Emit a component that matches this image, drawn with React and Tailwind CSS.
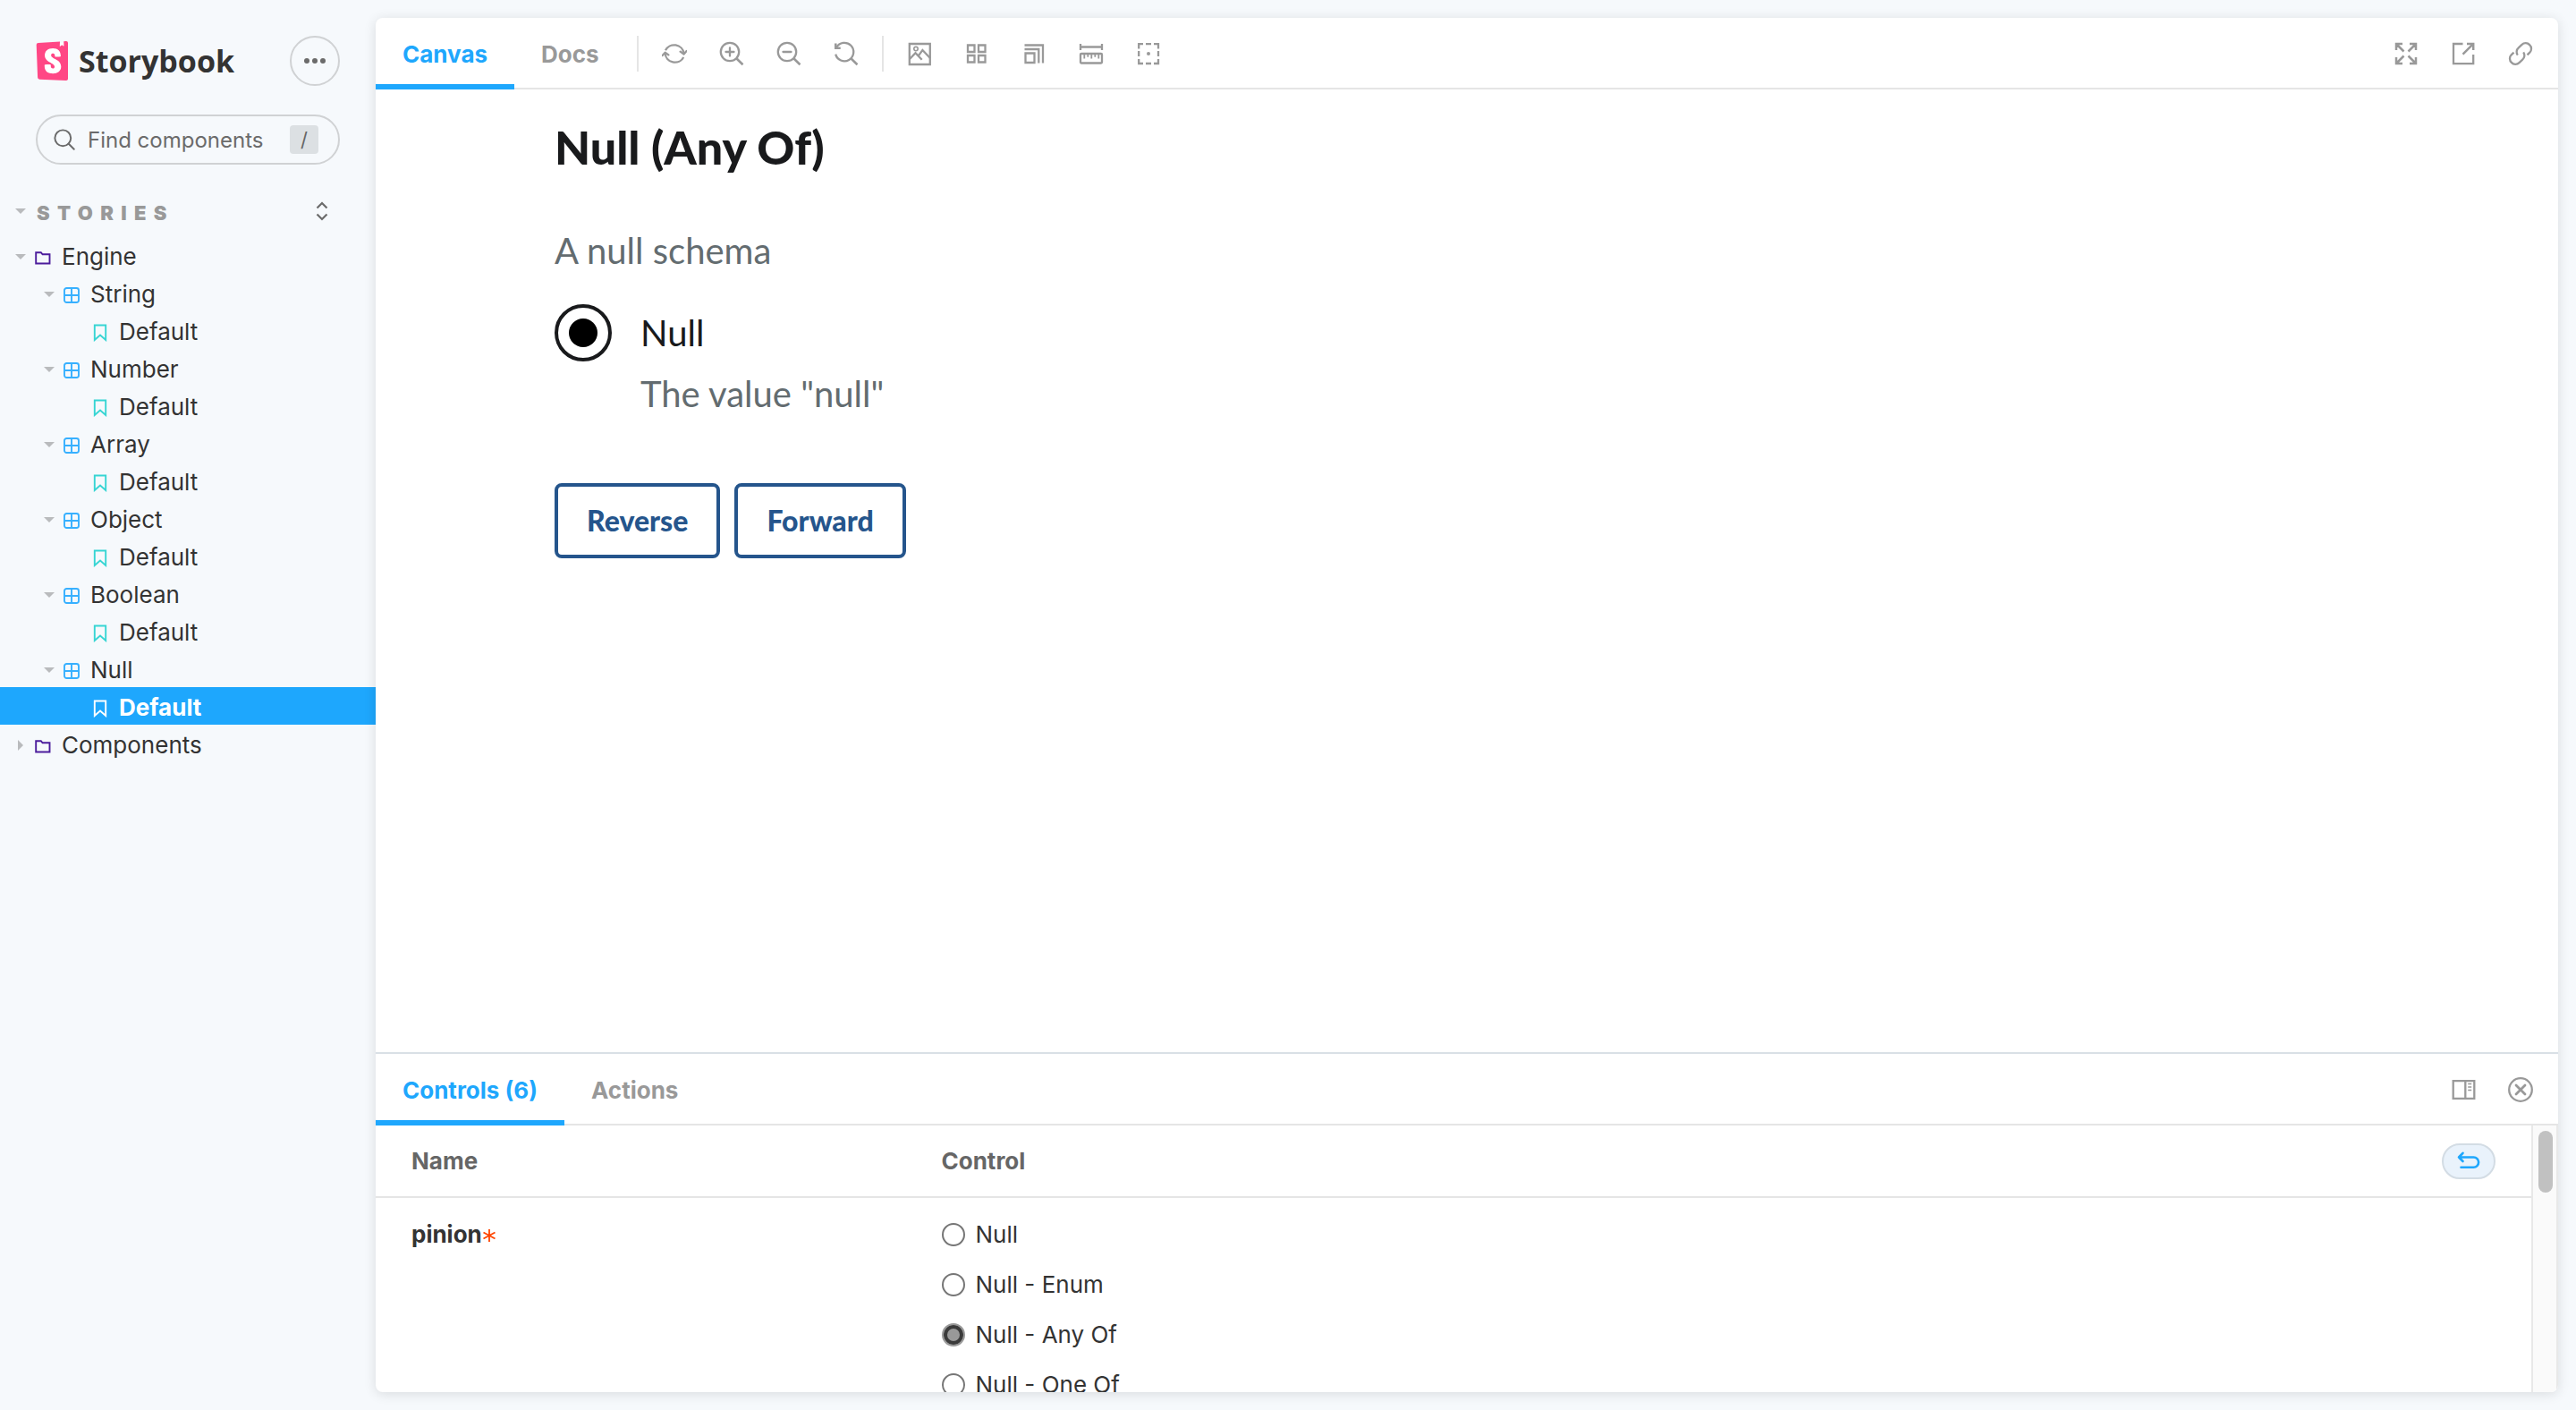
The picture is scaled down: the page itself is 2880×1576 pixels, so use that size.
import React from "react";

const SANS = "font-['Inter',sans-serif]";

/* ---------- icons ---------- */

function Icon({ children, className = "size-7" }) {
  return (
    <svg
      viewBox="0 0 28 28"
      className={className}
      fill="none"
      stroke="currentColor"
      strokeWidth="2.3"
      aria-hidden="true"
    >
      {children}
    </svg>
  );
}

const SyncIcon = () => (
  <Icon>
    <path d="M4 10.200A11 11 0 0 1 24.600 13.500" />
    <path d="M24.200 18A11 11 0 0 1 3.600 13.500" />
    <path d="M20.600 11.600l4 3 3-3.600" strokeLinecap="round" strokeLinejoin="round" />
    <path d="M.600 16l3-3.200 3.800 2.600" strokeLinecap="round" strokeLinejoin="round" />
  </Icon>
);

const ZoomInIcon = () => (
  <Icon>
    <circle cx="12" cy="12" r="10.2" />
    <path d="M19.3 19.3l7.2 7" strokeWidth="2.6" />
    <path d="M12 7.5v9M7.500 12h9" strokeLinecap="round" />
  </Icon>
);

const ZoomOutIcon = () => (
  <Icon>
    <circle cx="12" cy="12" r="10.2" />
    <path d="M19.3 19.3l7.2 7" strokeWidth="2.6" />
    <path d="M7.5 12h9" strokeLinecap="round" />
  </Icon>
);

const ZoomResetIcon = () => (
  <Icon>
    <path d="M3.2 7A10.2 10.2 0 1 1 2.2 14.6" />
    <path d="M19.3 19.3l7.2 7" strokeWidth="2.6" />
    <path d="M2.300 2.500v5.200h5.400" strokeWidth="2.600" />
  </Icon>
);

const PhotoIcon = () => (
  <Icon>
    <path d="M2.800 3h23v23h-23z" />
    <circle cx="10" cy="8.600" r="2.200" strokeWidth="1.600" />
    <path d="M3 20l6.500-6.800 7.200 7.600M12.600 16.600L17.400 10l8.600 9" />
  </Icon>
);

const GridIcon = () => (
  <Icon>
    <path d="M4 4.500h7.500v7.500H4zM16 4.500h7.500v7.500H16zM4 16h7.500v7.500H4zM16 16h7.500v7.500H16z" />
  </Icon>
);

const GrowIcon = () => (
  <Icon>
    <path d="M4.500 13.500h10v10.500h-10z" />
    <path d="M3.500 9h15.800v15.500M3.500 4.500H24v20" />
  </Icon>
);

const RulerIcon = () => (
  <Icon>
    <path d="M2 6.500h24M2 3v7M26 3v7" />
    <rect x="2" y="14" width="24" height="10.500" rx="1" />
    <path d="M6.300 14.500v5M10.300 14.500v3.200M14.300 14.500v5M18.300 14.500v3.200M22.300 14.500v5" strokeWidth="1.800" />
  </Icon>
);

const OutlineIcon = () => (
  <Icon>
    <path d="M3.200 8.400V3.200H8M11 3.200h6M20 3.200h5v5.200M25 11v6M25 20v5h-5M17 25h-6M8 25H3.200v-5M3.200 17v-6" />
    <circle cx="14" cy="14" r="2" fill="currentColor" stroke="none" />
  </Icon>
);

const ExpandIcon = () => (
  <Icon>
    <path d="M3 10V3h7M3.500 3.500l8 8M18 3h7v7M24.500 3.500l-8 8M3 18v7h7M3.500 24.500l8-8M25 18v7h-7M24.500 24.500l-8-8" strokeWidth="2.500" />
  </Icon>
);

const ShareIcon = () => (
  <Icon>
    <path d="M13.500 3H3v22.200h22.200V15" />
    <path d="M18 3h7.200v7M25 3.200L13.500 14.600" strokeWidth="2.500" />
  </Icon>
);

const LinkIcon = () => (
  <Icon>
    <path d="M9.300 16.200a6 6 0 0 1 1-8.200l3.700-3.500a6 6 0 0 1 8.600.2a6 6 0 0 1 .2 8.600L20 16" transform="translate(1.500 -.6)" />
    <path d="M9.300 16.200a6 6 0 0 1 1-8.200l3.700-3.500a6 6 0 0 1 8.600.2a6 6 0 0 1 .2 8.600L20 16" transform="rotate(180 14 14) translate(1.500 -.6)" />
  </Icon>
);

const SidePanelIcon = () => (
  <Icon>
    <path d="M2.700 4.200h23.600v19.600H2.700zM16.300 4v20" />
    <path d="M19.200 7.400h4M19.200 11h4M19.200 14.600h4" strokeWidth="1.500" />
  </Icon>
);

const CloseIcon = () => (
  <Icon>
    <circle cx="14" cy="14" r="12.800" />
    <path d="M9 9l10 10M19 9L9 19" strokeWidth="2.800" strokeLinecap="round" />
  </Icon>
);

const UndoIcon = () => (
  <Icon>
    <path d="M3 9.500h16.500a5.600 5.600 0 0 1 0 11.200H5.500M7.500 4.800L3 9.500l4.500 4.500" strokeWidth="2.600" strokeLinecap="round" strokeLinejoin="round" />
  </Icon>
);

const SearchIcon = () => (
  <Icon className="size-6 shrink-0 text-[#6b6b6b]">
    <circle cx="12" cy="12" r="10.400" />
    <path d="M19.300 19.300l7.200 7.200" strokeLinecap="round" />
  </Icon>
);

const SortIcon = () => (
  <svg viewBox="0 0 16 24" className="h-6 w-4" fill="none" stroke="currentColor" strokeWidth="2.2" aria-hidden="true">
    <path d="M2.500 8.500L8 3l5.500 5.500M2.500 15.500L8 21l5.500-5.500" />
  </svg>
);

function TreeIcon({ kind }) {
  if (kind === "folder") {
    return (
      <svg viewBox="0 0 18 18" className="size-[18px] shrink-0 text-[#4c1d9c]" fill="none" stroke="currentColor" strokeWidth="1.9" aria-hidden="true">
        <path d="M1.200 3.200h5.600l1.800 2.100h7.900v10.200H1.200z" />
      </svg>
    );
  }
  if (kind === "component") {
    return (
      <svg viewBox="0 0 18 18" className="size-[18px] shrink-0 text-[#37b0ff]" fill="none" stroke="currentColor" strokeWidth="1.900" aria-hidden="true">
        <rect x="1" y="1" width="16" height="16" rx="2.500" />
        <path d="M9 1v16M1 9h16" />
      </svg>
    );
  }
  return (
    <svg viewBox="0 0 18 20" className="h-5 w-[18px] shrink-0" fill="none" stroke="currentColor" strokeWidth="1.900" aria-hidden="true">
      <path d="M2.800 1.500h12.400v16.500L9 12.600l-6.200 5.400z" />
    </svg>
  );
}

function Caret({ open }) {
  return (
    <svg viewBox="0 0 12 12" className="size-3 shrink-0 text-[#b9bbbd]" fill="currentColor" aria-hidden="true">
      {open ? <path d="M0 3h12L6 9z" /> : <path d="M3 0v12l6-6z" />}
    </svg>
  );
}

function Logo() {
  return (
    <a href="#home" className="flex items-center gap-3 text-[#333]">
      <svg viewBox="2 0 19.6 24" className="h-11 w-9" aria-hidden="true">
        <path fill="#fff" d="M6 3h13v17H6zM16 1h4v3h-4z" />
        <path
          fill="#ff4785"
          d="M16.71.243l-.12 2.71a.18.18 0 00.29.15l1.06-.8.9.7a.18.18 0 00.28-.14l-.1-2.76 1.33-.1a1.2 1.2 0 011.279 1.2v21.596a1.2 1.2 0 01-1.26 1.2l-16.096-.72a1.2 1.2 0 01-1.15-1.16l-.75-19.797a1.2 1.2 0 011.13-1.27L16.7.222zM13.64 9.3c0 .47 3.16.24 3.59-.08 0-3.2-1.72-4.89-4.859-4.89-3.15 0-4.899 1.72-4.899 4.29 0 4.45 5.999 4.53 5.999 6.959 0 .7-.32 1.1-1.05 1.1-.96 0-1.35-.49-1.3-2.16 0-.36-3.649-.48-3.769 0-.27 4.03 2.23 5.2 5.099 5.2 2.79 0 4.969-1.49 4.969-4.18 0-4.77-6.099-4.64-6.099-6.999 0-.97.72-1.1 1.13-1.1.45 0 1.25.07 1.19 1.87z"
        />
      </svg>
      <span className="font-['Open_Sans',sans-serif] text-[34px] leading-10 font-bold">Storybook</span>
    </a>
  );
}

/* ---------- sidebar ---------- */

const TREE = [
  { label: "Engine", kind: "folder", depth: 0, open: true },
  ...["String", "Number", "Array", "Object", "Boolean", "Null"].flatMap((name) => [
    { label: name, kind: "component", depth: 1, open: true },
    { label: "Default", kind: "story", depth: 2, selected: name === "Null" },
  ]),
  { label: "Components", kind: "folder", depth: 0, open: false },
];

const INDENT = ["pl-[17px]", "pl-[49px]", "pl-[103px]"];

function TreeRow({ item }) {
  const story = item.kind === "story";
  const tone = item.selected
    ? "bg-[#1ea7fd] text-white font-bold"
    : "text-[#333]";
  const iconTone = story && !item.selected ? "text-[#37d5d3]" : "";
  return (
    <li>
      <a href="#story" className={`flex h-[42px] items-center pt-[3px] text-[26px] leading-8 ${INDENT[item.depth]} ${tone}`}>
        {!story && <Caret open={item.open} />}
        <span className={`pt-[2px] ${story ? "" : "ml-[10px]"} ${iconTone}`}>
          <TreeIcon kind={item.kind} />
        </span>
        <span className="ml-3">{item.label}</span>
      </a>
    </li>
  );
}

function Sidebar() {
  return (
    <nav className="w-[420px] shrink-0">
      <div className="flex items-center justify-between px-10 pt-10">
        <Logo />
        <button
          type="button"
          aria-label="Shortcuts"
          className="flex size-14 items-center justify-center gap-[3px] rounded-full border-2 border-[#d0d2d4]"
        >
          <i className="size-[6px] rounded-full bg-[#6b6b6b]" />
          <i className="size-[6px] rounded-full bg-[#6b6b6b]" />
          <i className="size-[6px] rounded-full bg-[#6b6b6b]" />
        </button>
      </div>
      <label className="mx-10 mt-8 flex h-14 items-center rounded-full border-2 border-[#d0d2d4] pr-[22px] pl-[18px]">
        <SearchIcon />
        <input
          type="text"
          aria-label="Find components"
          placeholder="Find components"
          className="ml-[14px] min-w-0 flex-1 bg-transparent pt-[2px] text-2xl text-[#666] outline-none placeholder:text-[#6b6b6b]"
        />
        <kbd className={`flex size-8 items-center justify-center rounded bg-[#dce0e3] text-[22px] text-[#666] ${SANS}`}>/</kbd>
      </label>
      <div className="mt-[30px] flex h-11 items-center pr-[52px] pl-[17px]">
        <button type="button" className="flex items-center gap-3 text-[#999]">
          <Caret open />
          <span className="pt-1 text-[22px] leading-7 font-black tracking-[0.38em]">STORIES</span>
        </button>
        <button type="button" aria-label="Collapse all" className="ml-auto text-[#6b6b6b]">
          <SortIcon />
        </button>
      </div>
      <ul className="mt-[6px]">
        {TREE.map((item, i) => (
          <TreeRow key={i} item={item} />
        ))}
      </ul>
    </nav>
  );
}

/* ---------- toolbar ---------- */

function Tab({ active, children }) {
  const tone = active
    ? "border-[#1ea7fd] text-[#1ea7fd]"
    : "border-transparent text-[#999]";
  return (
    <button
      type="button"
      role="tab"
      aria-selected={!!active}
      className={`-mb-[2px] border-b-[6px] px-[30px] pt-2 text-[26px] leading-8 font-bold ${tone}`}
    >
      {children}
    </button>
  );
}

function Tool({ label, children }) {
  return (
    <button type="button" aria-label={label} className="flex size-14 items-center justify-center text-[#999]">
      {children}
    </button>
  );
}

const Separator = () => <span className="mx-3 h-10 w-[2px] bg-[#e5e5e5]" />;

function Toolbar() {
  return (
    <div className="flex h-20 shrink-0 border-b-2 border-[#e5e5e5]">
      <div role="tablist" className="flex">
        <Tab active>Canvas</Tab>
        <Tab>Docs</Tab>
      </div>
      <div className="flex items-center pt-[2px]">
        <Separator />
        <div className="flex gap-2">
          <Tool label="Remount component"><SyncIcon /></Tool>
          <Tool label="Zoom in"><ZoomInIcon /></Tool>
          <Tool label="Zoom out"><ZoomOutIcon /></Tool>
          <Tool label="Reset zoom"><ZoomResetIcon /></Tool>
        </div>
        <Separator />
        <div className="flex gap-2">
          <Tool label="Change background"><PhotoIcon /></Tool>
          <Tool label="Apply grid"><GridIcon /></Tool>
          <Tool label="Change viewport size"><GrowIcon /></Tool>
          <Tool label="Enable measure"><RulerIcon /></Tool>
          <Tool label="Apply outlines"><OutlineIcon /></Tool>
        </div>
      </div>
      <div className="ml-auto flex items-center gap-2 pt-[2px] pr-[14px]">
        <Tool label="Go full screen"><ExpandIcon /></Tool>
        <Tool label="Open canvas in new tab"><ShareIcon /></Tool>
        <Tool label="Copy canvas link"><LinkIcon /></Tool>
      </div>
    </div>
  );
}

/* ---------- story ---------- */

function OutlineButton({ children }) {
  return (
    <button
      type="button"
      className="h-[84px] rounded-lg border-4 border-[#25558c] px-8 text-[32px] leading-10 font-black text-[#25558c]"
    >
      {children}
    </button>
  );
}

function Story() {
  return (
    <section className="min-h-0 flex-1 overflow-hidden pt-8 pl-[200px] font-['Lato',sans-serif] text-[40px] leading-[52px]">
      <h1 className="text-[52px] leading-[64px] font-black text-[#191a1c]">Null (Any Of)</h1>
      <p className="mt-[58px] text-[#636c70]">A null schema</p>
      <div className="mt-[34px] flex gap-8">
        <input
          id="null-option"
          type="radio"
          name="any-of"
          defaultChecked
          className="size-16 shrink-0 appearance-none rounded-full border-4 border-[#191a1c] bg-white p-3 checked:bg-black checked:bg-clip-content"
        />
        <div className="pt-[6px]">
          <label htmlFor="null-option" className="block text-[#191a1c]">Null</label>
          <p className="mt-4 text-[#636c70]">The value "null"</p>
        </div>
      </div>
      <div className="mt-[74px] flex gap-4">
        <OutlineButton>Reverse</OutlineButton>
        <OutlineButton>Forward</OutlineButton>
      </div>
    </section>
  );
}

/* ---------- addon panel ---------- */

const OPTIONS = ["Null", "Null - Enum", "Null - Any Of", "Null - One Of"];

function Controls() {
  return (
    <div className="flex min-h-0 flex-1">
      <div className="flex-1 overflow-hidden">
        <table className="w-full table-fixed text-left text-[26px] leading-8">
          <thead>
            <tr className="h-20 border-b-2 border-[#e5e5e5] text-[#666]">
              <th className="w-1/4 pl-10 font-bold">Name</th>
              <th className="pl-[30px] font-bold">
                <div className="flex items-center justify-between pr-10">
                  Control
                  <button
                    type="button"
                    aria-label="Reset controls"
                    className="flex h-10 w-[60px] items-center justify-center rounded-full border-2 border-[#d3dce4] bg-[#e9f2fb] text-[#1ea7fd]"
                  >
                    <UndoIcon />
                  </button>
                </div>
              </th>
            </tr>
          </thead>
          <tbody>
            <tr className="align-top text-[#333]">
              <td className="pt-[25px] pl-10 font-bold">
                <span className="flex items-center">
                  pinion
                  <svg viewBox="0 0 16 16" role="img" aria-label="required" className="mt-[2px] size-4 text-[#ff4400]" stroke="currentColor" strokeWidth="1.8">
                    <path d="M8 1v14M1.500 4.500l13 7M14.500 4.500l-13 7" />
                  </svg>
                </span>
              </td>
              <td className="pt-[25px] pl-[30px]">
                <div className="flex flex-col gap-6">
                  {OPTIONS.map((o) => (
                    <label key={o} className="flex items-center gap-3">
                      <input
                        type="radio"
                        name="pinion"
                        defaultChecked={o === "Null - Any Of"}
                        className="size-[26px] appearance-none rounded-full border-2 border-[#767676] bg-white checked:border-[#999] checked:bg-[#999] checked:shadow-[inset_0_0_0_4px_#3b3b3b]"
                      />
                      {o}
                    </label>
                  ))}
                </div>
              </td>
            </tr>
          </tbody>
        </table>
      </div>
      <div className="w-[30px] shrink-0 border-x-2 border-[#e8e8e8] bg-[#fafafa] px-[6px] pt-[6px]">
        <div className="h-[69px] w-4 rounded-full bg-[#c1c1c1]" />
      </div>
    </div>
  );
}

function AddonPanel() {
  return (
    <section className="flex h-[380px] shrink-0 flex-col border-t-2 border-[#d9e0e6]">
      <div className="flex h-20 shrink-0 border-b-2 border-[#e5e5e5]">
        <div role="tablist" className="flex">
          <Tab active>Controls (6)</Tab>
          <Tab>Actions</Tab>
        </div>
        <div className="ml-auto flex items-center gap-2 pt-[2px] pr-[14px]">
          <Tool label="Change orientation"><SidePanelIcon /></Tool>
          <Tool label="Hide addons"><CloseIcon /></Tool>
        </div>
      </div>
      <Controls />
    </section>
  );
}

export default function App() {
  return (
    <div className={`flex h-screen bg-[#f6f9fc] ${SANS}`}>
      <Sidebar />
      <div className="min-w-0 flex-1 py-5 pr-5">
        <main className="flex h-full flex-col overflow-hidden rounded-lg bg-white shadow-[0_2px_14px_rgba(0,0,0,0.12)]">
          <Toolbar />
          <Story />
          <AddonPanel />
        </main>
      </div>
    </div>
  );
}
